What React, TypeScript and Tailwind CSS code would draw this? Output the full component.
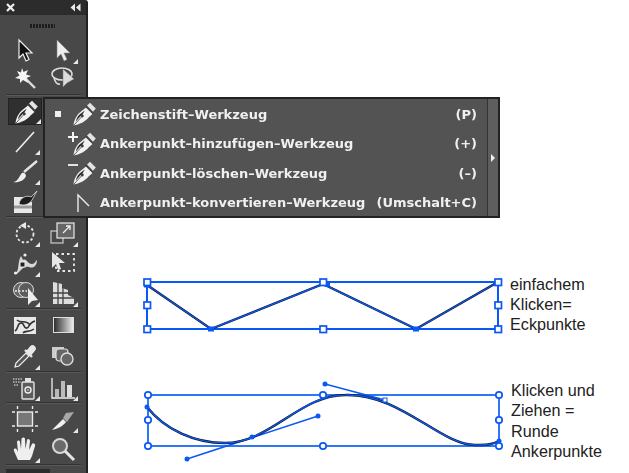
import React from "react";

const W = "#ececec";

function Nib({ mod }: { mod?: "+" | "-" | "c" }) {
  return (
    <svg width="30" height="26" viewBox="0 0 30 26" className="block">
      <path d="M5.5 24.5 C6 18.5 9 13.5 13 10.5 L18 6.5 L24.5 13 L20.5 16.5 C17.5 20.5 11.5 23.5 5.5 24.5 Z" fill="#f2f2f2" />
      <path d="M7.8 20.5 C8.5 17 10.5 14 13.8 11.8 L16.8 9.5 L14.5 13.5 L12.2 15.5 Z" fill="#2e2e2e" />
      <path d="M5.5 24.5 L13.5 16" stroke="#3a3a3a" strokeWidth="0.8" />
      <circle cx="14.3" cy="15" r="1.4" fill="#3a3a3a" />
      <path d="M19 4.5 L22 1.8 L27.8 7.5 L25 10.8 Z" fill="#e4e4e4" />
      <path d="M17.5 5 L25.2 12.6" stroke="#444" strokeWidth="1.2" />
      {mod === "+" && <path d="M0 6 H10 M5 1 V11" stroke="#f4f4f4" strokeWidth="2" />}
      {mod === "-" && <path d="M0 5 H10" stroke="#f4f4f4" strokeWidth="1.8" />}
    </svg>
  );
}

function Tool({ children, flyout, active }: { children?: React.ReactNode; flyout?: boolean; active?: boolean }) {
  return (
    <div className="relative flex h-full items-center justify-center">
      {active && <div className="absolute inset-x-[2px] inset-y-[1px] border border-[#222] bg-[#2f2f2f]" />}
      <div className="relative">{children}</div>
      {flyout && (
        <div className={`absolute h-0 w-0 border-b-[5px] border-l-[5px] border-b-[#e8e8e8] border-l-transparent ${active ? "bottom-[2px] right-[3px]" : "bottom-[1px] right-[4px]"}`} />
      )}
    </div>
  );
}

const Icon = ({ children, s = 26 }: { children: React.ReactNode; s?: number }) => (
  <svg width={s} height={s} viewBox="0 0 26 26" className="block" fill="none">
    {children}
  </svg>
);

function Sep() {
  return <div className="mx-[6px] h-[2px] w-[75px] border-t border-t-[#333] border-b border-b-[#585858]" />;
}

function Row({ h, left, right }: { h: string; left: React.ReactNode; right: React.ReactNode }) {
  return (
    <div className={`grid grid-cols-[38px_38px] pl-[6px] ${h}`}>
      {left}
      {right}
    </div>
  );
}

function Toolbar() {
  return (
    <div className="flex h-[473px] w-[88px] shrink-0 flex-col overflow-hidden rounded-tr-[3px] border-r-2 border-r-[#222] bg-[#484848]">
      <div className="flex h-[15px] items-center justify-between bg-[#2c2c2c] pl-[6px] pr-[5px]">
        <svg width="9" height="9" viewBox="0 0 9 9"><path d="M1 1 L8 8 M8 1 L1 8" stroke="#f0f0f0" strokeWidth="2.2" /></svg>
        <svg width="11" height="9" viewBox="0 0 11 9"><path d="M5 0.5 V8.5 L0.5 4.5 Z M10.5 0.5 V8.5 L6 4.5 Z" fill="#e8e8e8" /></svg>
      </div>
      <div className="flex h-[23px] items-center justify-center pr-[1px]">
        <div className="h-[4px] w-[25px] bg-[repeating-linear-gradient(90deg,#1c1c1c_0,#1c1c1c_2px,#4a4a4a_2px,#4a4a4a_3px)]" />
      </div>
      <Row
        h="h-[27px]"
        left={<Tool><Icon><path d="M7 2 V20 L11 16 L14 23 L17 21.5 L14 15 L20 15 Z" fill="#111" stroke="#eee" strokeWidth="1.2" /></Icon></Tool>}
        right={<Tool flyout><Icon><path d="M7 2 V20 L11 16 L14 23 L17 21.5 L14 15 L20 15 Z" fill="#eee" stroke="#888" strokeWidth="0.6" /></Icon></Tool>}
      />
      <Row
        h="h-[27px]"
        left={<Tool><Icon><path d="M12 12 L23 23" stroke="#ddd" strokeWidth="2.4" /><path d="M10 3 L11.5 7 L16 5 L14 9.5 L19 11 L14.5 13 L16 18 L11 15 L8 18 L8 14 L3 13 L7.5 10.5 L5 6 L9 7.5 Z" fill="#f4f4f4" /></Icon></Tool>}
        right={<Tool><Icon><ellipse cx="12" cy="9" rx="10" ry="6" stroke="#ddd" strokeWidth="1.5" /><path d="M4 13 Q6 20 10 19" stroke="#ddd" strokeWidth="1.5" /><path d="M13 4 V22 L17 18 L24 14 Z" fill="#dcdcdc" stroke="#777" strokeWidth="0.5" /></Icon></Tool>}
      />
      <div className="h-[3px]" />
      <Sep />
      <div className="h-[1px]" />
      <Row h="h-[29px]" left={<Tool flyout active><Nib /></Tool>} right={<Tool />} />
      <Row
        h="h-[30px]"
        left={<Tool flyout><Icon><path d="M4 24 L22 4" stroke="#eee" strokeWidth="1.6" /></Icon></Tool>}
        right={<Tool />}
      />
      <Row
        h="h-[30px]"
        left={<Tool flyout><Icon><path d="M12 14 L25 3" stroke="#e4e4e4" strokeWidth="2.4" /><path d="M1 24 C6 24 7 18 10 15 C12 14 14 16 14 18 C12 23 6 25 1 24 Z" fill="#f0f0f0" /></Icon></Tool>}
        right={<Tool />}
      />
      <Row
        h="h-[30px]"
        left={<Tool><Icon><path d="M2 9 H14 L10 14 L20 14 V25 H2 Z" fill="#e8e8e8" /><path d="M2 19 H20" stroke="#9a9a9a" strokeWidth="3" /><path d="M7 16 C8 9 15 7 19 9 L25 3 L20 12 C17 17 11 18 7 16 Z" fill="#1d1d1d" stroke="#ddd" strokeWidth="0.8" /></Icon></Tool>}
        right={<Tool />}
      />
      <Sep />
      <Row
        h="h-[31px]"
        left={<Tool flyout><Icon><circle cx="13" cy="14" r="8.5" stroke="#e8e8e8" strokeWidth="1.8" strokeDasharray="2.5 2.2" /><path d="M14 2 V9 L8 5.5 Z" fill="#e8e8e8" /></Icon></Tool>}
        right={<Tool flyout><Icon><rect x="1" y="11" width="12" height="12" stroke="#ccc" strokeWidth="1.2" /><rect x="7" y="3" width="17" height="15" fill="#666" stroke="#e8e8e8" strokeWidth="1.2" /><path d="M13 13 L20 6 M16 6 H20 V10" stroke="#eee" strokeWidth="1.3" /></Icon></Tool>}
      />
      <Row
        h="h-[30px]"
        left={<Tool flyout><Icon><path d="M3 24 C8 20 5 13 9 6 L11 10 C15 8 15 14 20 14 C23 14 24 10 25 10 C25 16 21 19 17 17 C13 16 11 18 9 20 L5 24 Z" fill="#d8d8d8" /><rect x="8" y="12" width="5" height="5" fill="#222" stroke="#eee" /><circle cx="3.5" cy="23" r="1.6" fill="#eee" /><circle cx="13" cy="5" r="1.6" fill="#eee" /></Icon></Tool>}
        right={<Tool><Icon><rect x="6" y="4" width="18" height="17" stroke="#e8e8e8" strokeWidth="1.8" strokeDasharray="2.5 3" /><path d="M2 2 V18 L6 14 L8 20 L11 19 L9 13 L15 13 Z" fill="#e8e8e8" /></Icon></Tool>}
      />
      <Row
        h="h-[30px]"
        left={<Tool flyout><Icon><circle cx="9" cy="10" r="7.5" fill="#666" stroke="#ddd" strokeWidth="1" /><circle cx="14" cy="10" r="7.5" fill="#5c5c5c" stroke="#ddd" strokeWidth="1" /><path d="M3 11 H15" stroke="#eee" strokeWidth="1.4" strokeDasharray="2 1.5" /><path d="M16 8 V25 L20 21 L26 20 Z" fill="#eee" /></Icon></Tool>}
        right={<Tool flyout><Icon><path d="M3 2 L12 4 L12 8 L18 10 L18 15 L24 18 V24 H3 Z" fill="#ddd" /><path d="M8 3 V24 M13 5 V24 M3 13 H18 M3 18 H24" stroke="#444" strokeWidth="1.3" /></Icon></Tool>}
      />
      <Sep />
      <Row
        h="h-[31px]"
        left={<Tool><svg width="22" height="17" viewBox="0 0 22 17" fill="none" className="block"><rect width="22" height="17" fill="#e8e8e8" /><path d="M1 14 C5 11 3 6 7 6 C11 6 9 12 13 11 C16 10 14 6 21 4 M3 3 C7 7 12 2 16 8 M9 16 C11 13 15 16 20 12" stroke="#333" strokeWidth="1.6" /></svg></Tool>}
        right={<Tool><svg width="21" height="16" viewBox="0 0 21 16"><defs><linearGradient id="g1" x1="0" x2="1" y1="0" y2="0"><stop offset="0" stopColor="#2a2a2a" /><stop offset="1" stopColor="#f0f0f0" /></linearGradient></defs><rect x="0.5" y="0.5" width="20" height="15" fill="url(#g1)" stroke="#ddd" /></svg></Tool>}
      />
      <Row
        h="h-[30px]"
        left={<Tool flyout><Icon><path d="M3 24 L4 20 L14 10 L17 13 L7 23 Z" fill="#555" stroke="#eee" strokeWidth="1.2" /><path d="M13 7 L20 14 M15 9 L19 4 C21 2 24 5 22 7 L18 12" stroke="#e8e8e8" strokeWidth="2.4" fill="#e8e8e8" /></Icon></Tool>}
        right={<Tool><Icon><rect x="2" y="4" width="12" height="11" fill="#ccc" /><rect x="6" y="6" width="12" height="12" rx="3" fill="#666" stroke="#ddd" strokeWidth="1.2" /><circle cx="17" cy="16" r="6" fill="#666" stroke="#ddd" strokeWidth="1.4" /></Icon></Tool>}
      />
      <Sep />
      <Row
        h="h-[30px]"
        left={<Tool flyout><Icon><rect x="10" y="7" width="12" height="17" rx="1" fill="#5c5c5c" stroke="#e4e4e4" strokeWidth="1.4" /><rect x="13" y="3" width="6" height="4" fill="#e4e4e4" /><circle cx="16" cy="15" r="3" stroke="#eee" strokeWidth="1.4" /><circle cx="16" cy="15" r="0.8" fill="#eee" /><path d="M1 4 H11 M1 7 H9 M2 10 H7" stroke="#bbb" strokeWidth="1.4" strokeDasharray="1.5 1" /></Icon></Tool>}
        right={<Tool flyout><Icon><path d="M2 3 V23 H25" stroke="#eee" strokeWidth="1.3" /><rect x="5" y="14" width="4" height="8" fill="#b8b8b8" /><rect x="11" y="6" width="4" height="16" fill="#bbb" /><rect x="17" y="10" width="5" height="12" fill="#ddd" /></Icon></Tool>}
      />
      <Sep />
      <Row
        h="h-[30px]"
        left={<Tool><Icon><rect x="5.5" y="6" width="15" height="14" fill="#777" stroke="#ececec" strokeWidth="1.4" /><path d="M0 6 H3 M23 6 H26 M0 20 H3 M23 20 H26 M5.5 0 V3 M20.5 0 V3 M5.5 23 V26 M20.5 23 V26" stroke="#ececec" strokeWidth="1.4" /></Icon></Tool>}
        right={<Tool flyout><Icon><path d="M2 24 L13 13 L16 16 C12 21 7 23 2 24 Z" fill="#f0f0f0" /><path d="M13 12 L17 16 L24 6 L16 7 Z" fill="#a8a8a8" /></Icon></Tool>}
      />
      <Row
        h="h-[30px]"
        left={<Tool flyout><Icon><path d="M6 24 L2 15 C1 12 4 12 5 14 L6 16 L5 6 C5 4 8 4 8 6 L9 13 L9.5 3 C10 1 13 1 13 3 L13.5 13 L15 4 C15.5 2 18 3 18 5 L17 14 L20 8 C21 6 24 8 23 10 L20 20 L18 24 Z" fill="#efefef" /></Icon></Tool>}
        right={<Tool><Icon><circle cx="10" cy="10" r="7" fill="#6a6a6a" stroke="#d8d8d8" strokeWidth="2" /><path d="M15 15 L24 24" stroke="#e4e4e4" strokeWidth="3" /></Icon></Tool>}
      />
      <Sep />
      <div className="mx-[6px] mt-[3px] h-[4px] w-[44px] bg-[#2c2c2c]" />
    </div>
  );
}

function MenuRow({ bullet, mod, label, keys, corner }: { bullet?: boolean; mod?: "+" | "-"; label: string; keys: string; corner?: boolean }) {
  return (
    <div className="flex h-[29.5px] shrink-0 items-center pr-[10px] pt-[1px]">
      <div className="flex w-[23px] justify-end pr-[7px]">{bullet && <div className="h-[6px] w-[6px] bg-[#f0f0f0]" />}</div>
      <div className="flex w-[32px] justify-start">
        {corner ? (
          <svg width="26" height="24" viewBox="0 0 26 24" className="block"><path d="M10 21 V4 L21 15" stroke={W} strokeWidth="1.4" fill="none" /></svg>
        ) : (
          <Nib mod={mod} />
        )}
      </div>
      <span className="flex-1 whitespace-nowrap">{label}</span>
      <span className="whitespace-nowrap">{keys}</span>
    </div>
  );
}

function Menu() {
  return (
    <div className="absolute left-[43px] top-[97px] flex h-[121px] w-[457px] border-2 border-[#222] bg-[#535353] font-['DejaVu_Sans',sans-serif] text-[13px] font-bold text-[#f0f0f0] blur-[0.3px]">
      <div className="flex h-full flex-1 flex-col overflow-hidden">
        <MenuRow bullet label="Zeichenstift–Werkzeug" keys="(P)" />
        <MenuRow mod="+" label="Ankerpunkt–hinzufügen–Werkzeug" keys="(+)" />
        <MenuRow mod="-" label="Ankerpunkt–löschen–Werkzeug" keys="(–)" />
        <MenuRow corner label="Ankerpunkt–konvertieren–Werkzeug" keys="(Umschalt+C)" />
      </div>
      <div className="flex w-[11px] items-center justify-center border-l border-l-[#333] bg-[#5e5e5e]">
        <div className="h-0 w-0 border-y-[4px] border-l-[4px] border-y-transparent border-l-[#f0f0f0]" />
      </div>
    </div>
  );
}

const BLUE = "#0a58f5";

function Handle({ x, y, round }: { x: number; y: number; round?: boolean }) {
  return round ? (
    <circle cx={x} cy={y} r="3.2" fill="#fff" stroke={BLUE} strokeWidth="1.7" />
  ) : (
    <rect x={x - 3} y={y - 3} width="6.5" height="6.5" fill="#fff" stroke={BLUE} strokeWidth="1.7" />
  );
}

function DiagramOne() {
  const pts = "7,11 71,55 183,10 276,55 358,8";
  return (
    <svg width="365" height="65" viewBox="0 0 365 65" className="block shrink-0">
      <rect x="7" y="8" width="351" height="47" fill="none" stroke={BLUE} strokeWidth="2" />
      <polyline points={pts} fill="none" stroke="#111" strokeWidth="2.4" />
      <polyline points={pts} fill="none" stroke={BLUE} strokeWidth="1.4" />
      {[[71, 55], [276, 55], [7, 11], [187, 10]].map(([x, y]) => (
        <rect key={x} x={x - 3} y={y - 2.5} width="6" height="5" fill={BLUE} />
      ))}
      {[[7, 8], [183, 8], [358, 8], [7, 31], [358, 31], [7, 55], [183, 55], [358, 55]].map(([x, y]) => (
        <Handle key={`${x}-${y}`} x={x} y={y} />
      ))}
    </svg>
  );
}

function DiagramTwo() {
  const d = "M7 27 C25 50 55 63 85 63 C130 63 160 15 205 15 C260 13 300 65 335 65 C345 65 352 65 359 61";
  return (
    <svg width="365" height="85" viewBox="0 0 365 85" className="block shrink-0">
      <rect x="8" y="15" width="351" height="51" fill="none" stroke="#2f78f5" strokeWidth="2" />
      <path d="M47 79 L178 36" stroke={BLUE} strokeWidth="1.6" />
      <path d="M185 4 L245 20" stroke={BLUE} strokeWidth="1.6" />
      <path d={d} fill="none" stroke="#111" strokeWidth="2.4" />
      <path d={d} fill="none" stroke={BLUE} strokeWidth="1.4" />
      {[[47, 79], [178, 36], [185, 4], [112, 57], [7, 27], [359, 61]].map(([x, y]) => (
        <circle key={x} cx={x} cy={y} r="2.5" fill={BLUE} />
      ))}
      <rect x="243" y="18" width="4" height="4" fill="#fff" stroke={BLUE} />
      {[[8, 15], [183, 15], [359, 15], [8, 40], [359, 40], [8, 66], [183, 66], [359, 66]].map(([x, y]) => (
        <Handle key={`${x}-${y}`} x={x} y={y} round />
      ))}
    </svg>
  );
}

export default function App() {
  return (
    <div className="relative flex h-[473px] w-[629px] overflow-hidden bg-white">
      <Toolbar />
      <Menu />
      <div className="flex flex-1 flex-col pl-[52px] pt-[274px] font-['Liberation_Sans',sans-serif] text-[16.2px] leading-[20px] text-[#222]">
        <div className="flex h-[65px] items-start">
          <DiagramOne />
          <div className="ml-[5px] whitespace-nowrap">
            <p>einfachem</p>
            <p>Klicken=</p>
            <p>Eckpunkte</p>
          </div>
        </div>
        <div className="mt-[41px] flex h-[85px] items-start">
          <DiagramTwo />
          <div className="ml-[6px] whitespace-nowrap leading-[20.3px]">
            <p>Klicken und</p>
            <p>Ziehen =</p>
            <p>Runde</p>
            <p>Ankerpunkte</p>
          </div>
        </div>
      </div>
    </div>
  );
}
